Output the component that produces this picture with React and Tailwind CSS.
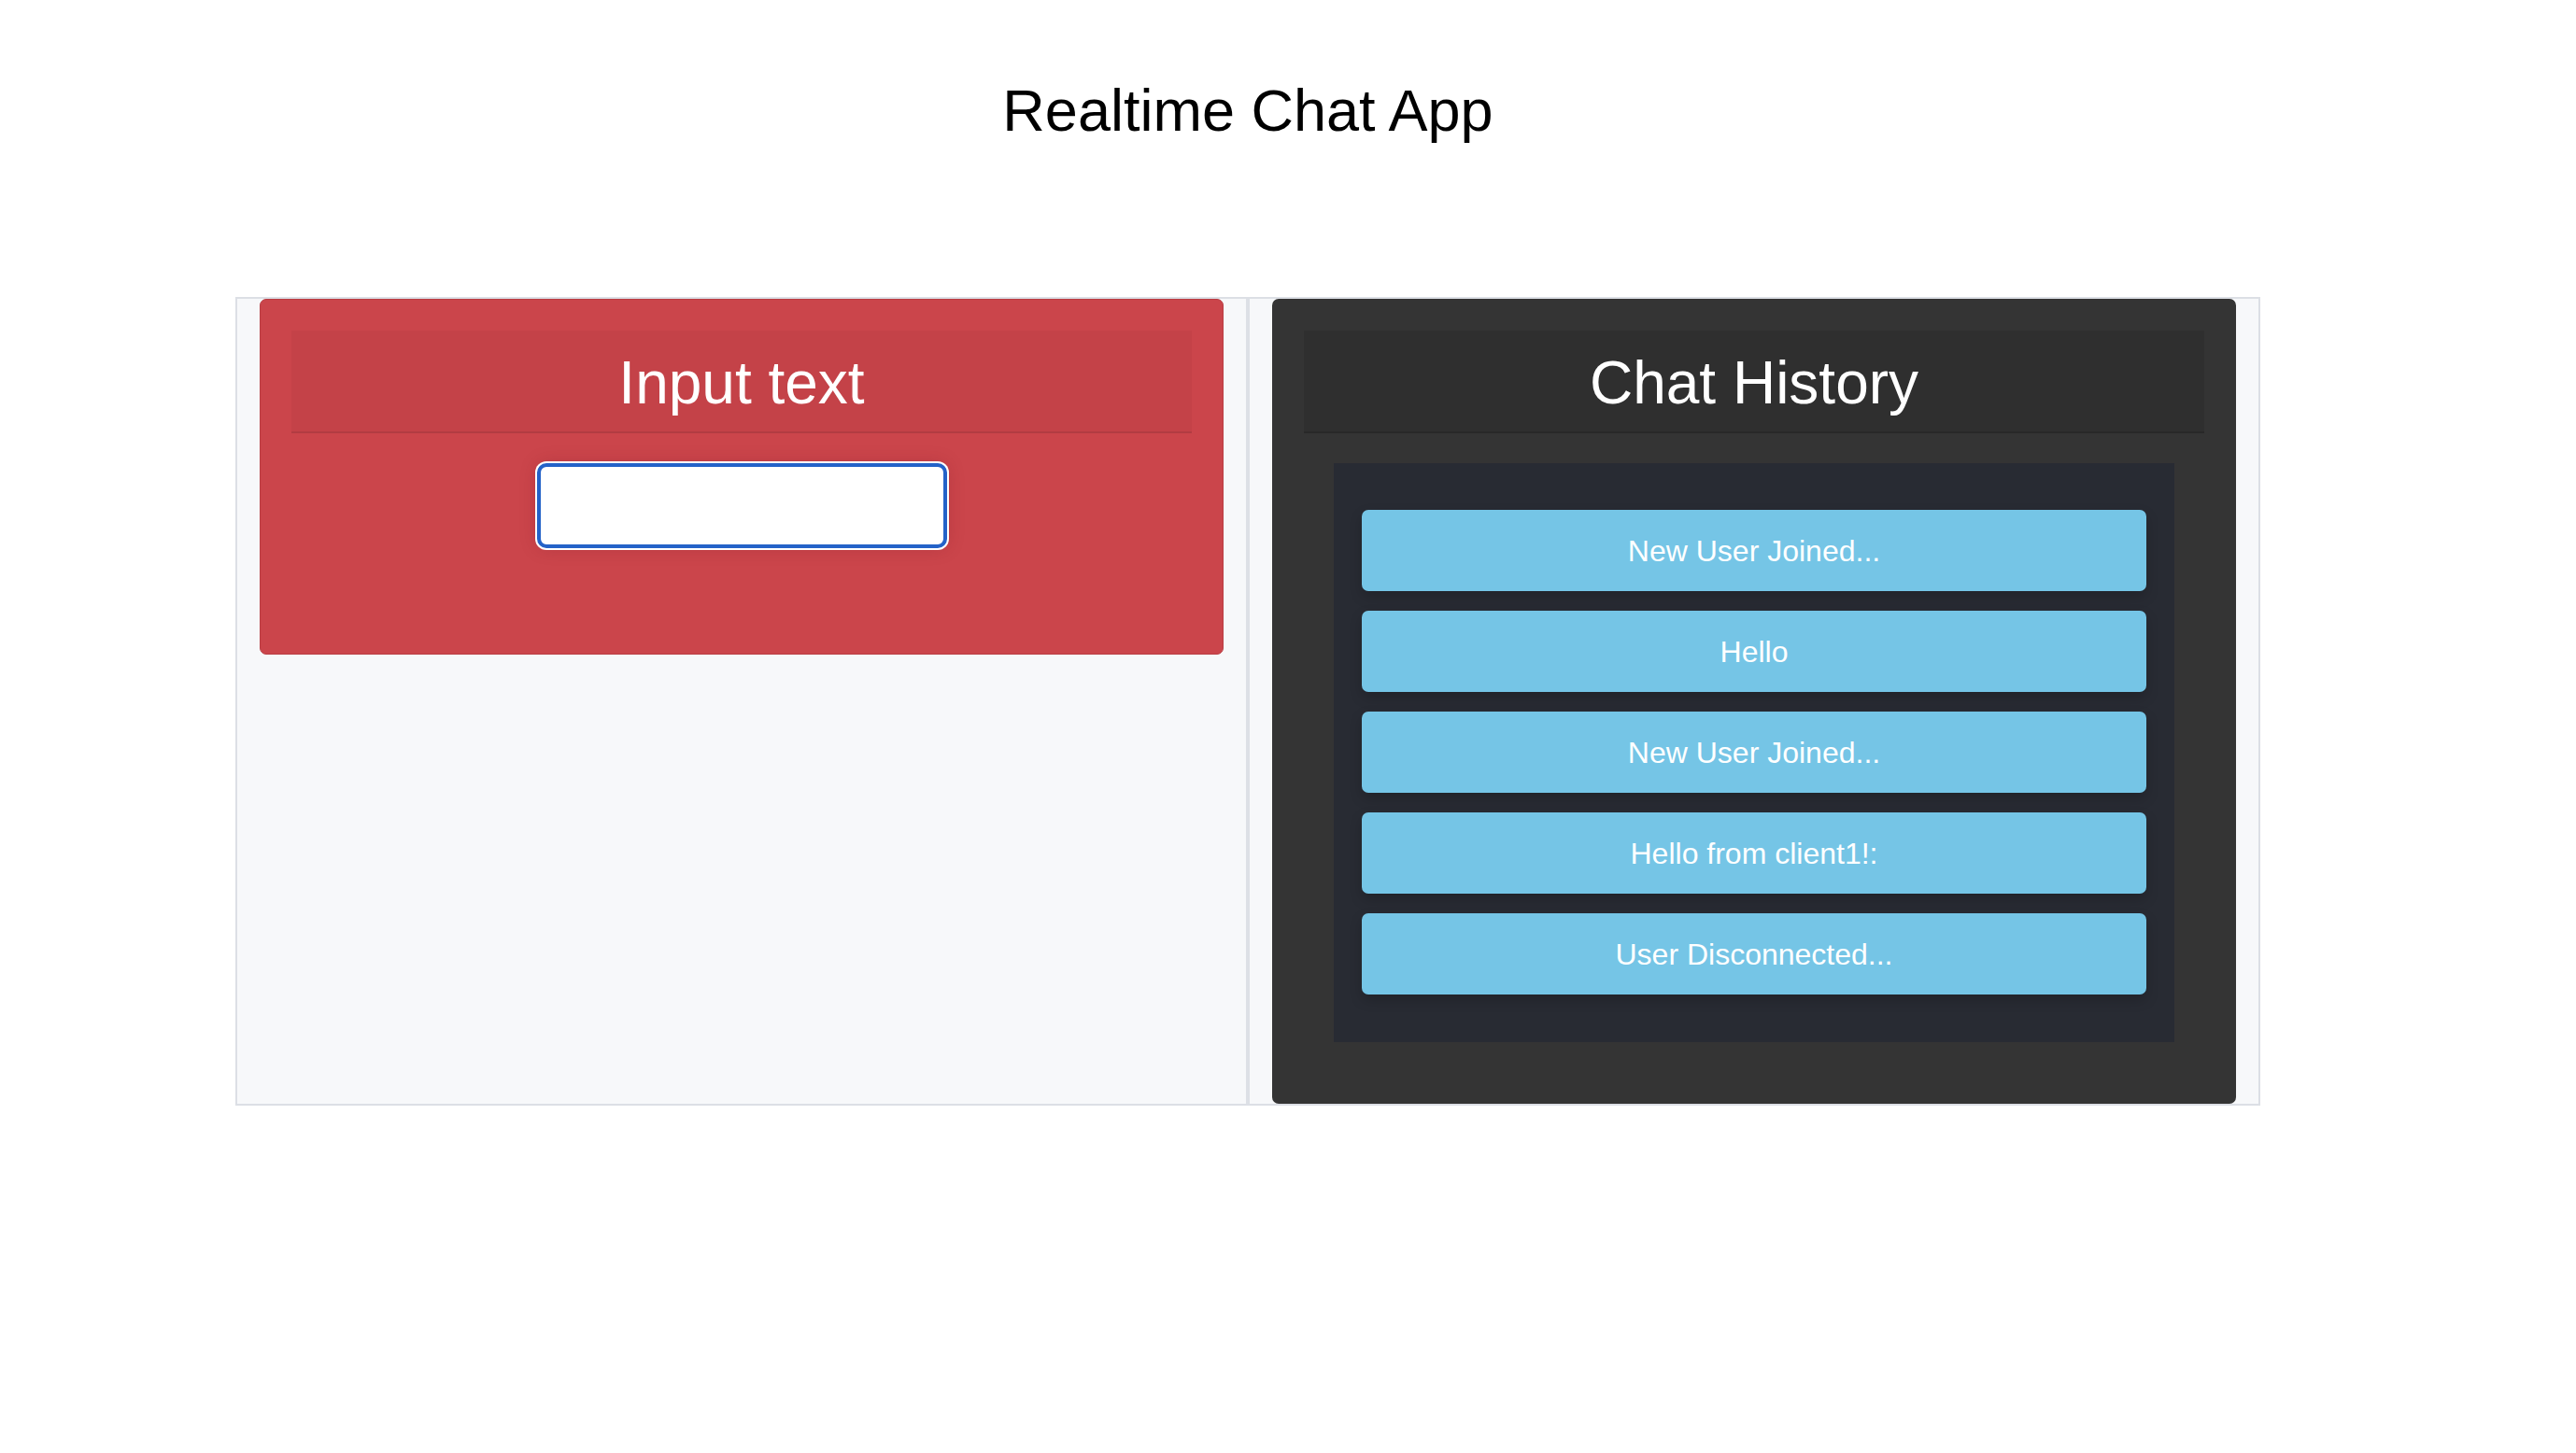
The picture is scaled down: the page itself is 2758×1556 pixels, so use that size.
import React from 'react';

const App = () => {
  const messages = [
    'New User Joined...',
    'Hello',
    'New User Joined...',
    'Hello from client1!:',
    'User Disconnected...',
  ];

  return (
    <div className="min-h-screen bg-white font-['Liberation_Sans',Arial,sans-serif]">
      <div className="ml-[252px] w-[2168px]">
        <h1 className="pt-[87px] text-center text-[63px] leading-none font-normal text-black">
          Realtime Chat App
        </h1>

        {/* Main panel */}
        <div className="mt-[168px] flex border-2 border-[#dcdfe5] bg-[#f7f8fa]">
          {/* Input column */}
          <div className="w-[1080px] px-[24px] flex items-start">
            <div className="w-full h-[381px] rounded-[7px] border border-[#b93e44] bg-[#cb454b] p-[33px]">
              <div className="h-[110px] flex items-center justify-center border-b-2 border-[#b23c42] bg-[#c44248] pt-[4px]">
                <h2 className="text-[64px] leading-none text-white">Input text</h2>
              </div>
              <div className="flex justify-center pt-[32px]">
                <input
                  type="text"
                  className="w-[439px] h-[91px] rounded-[10px] border-4 border-[#2462c8] bg-white ring-2 ring-white shadow-[0_0_18px_rgba(120,20,30,0.25)] outline-none px-3 text-[28px]"
                />
              </div>
            </div>
          </div>

          {/* Divider */}
          <div className="w-[4px] bg-[#dde0e6]" />

          {/* Chat history column */}
          <div className="w-[1080px] px-[24px]">
            <div className="rounded-[7px] bg-[#343434] p-[34px]">
              <div className="h-[110px] flex items-center justify-center border-b-2 border-[#282828] bg-[#2f2f2f] pt-[4px]">
                <h2 className="text-[64px] leading-none text-white">Chat History</h2>
              </div>
              <div className="p-[32px]">
                <div className="flex flex-col gap-[21px] bg-[#282b33] px-[30px] pt-[50px] pb-[51px]">
                  {messages.map((msg, i) => (
                    <div
                      key={i}
                      className="h-[87px] flex items-center justify-center rounded-[7px] bg-[#75c5e6] text-[32px] leading-none text-white shadow-[0_6px_14px_rgba(0,0,0,0.18)]"
                    >
                      {msg}
                    </div>
                  ))}
                </div>
              </div>
            </div>
          </div>
        </div>
      </div>
    </div>
  );
};

export default App;
